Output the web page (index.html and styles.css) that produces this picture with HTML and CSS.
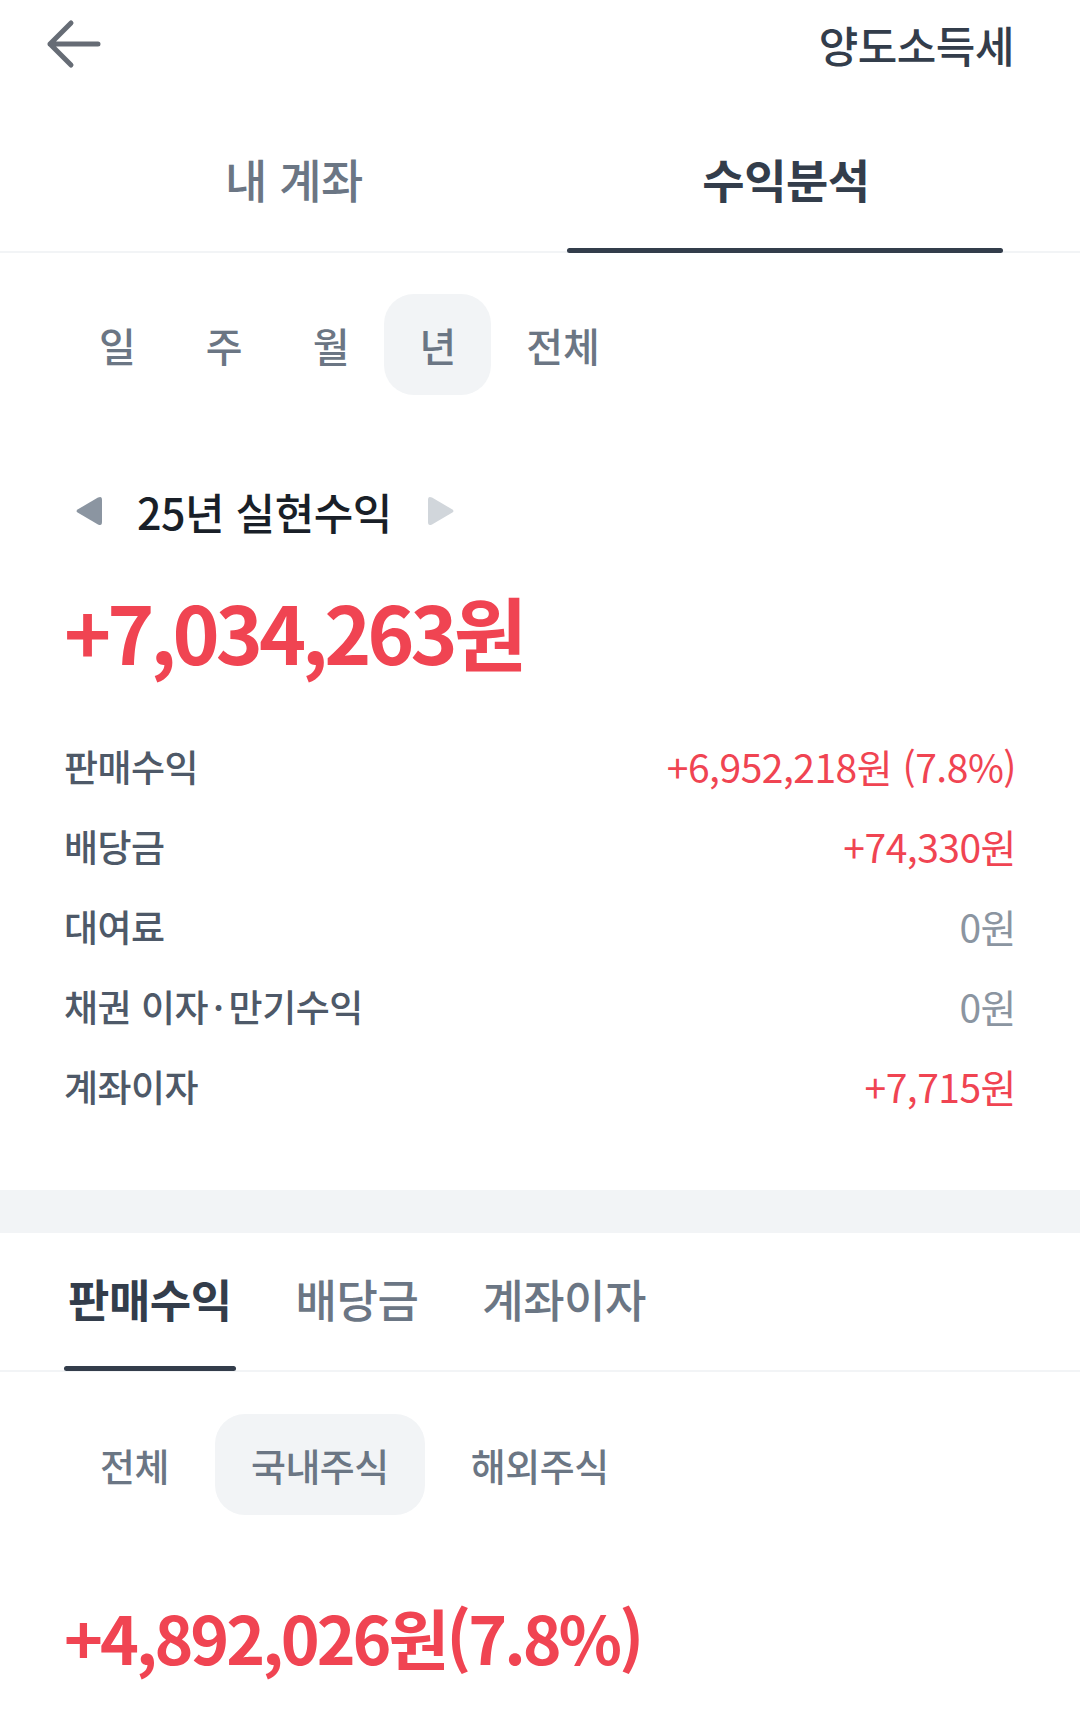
FILE: index.html
```html
<!DOCTYPE html>
<html lang="ko">
<head>
<meta charset="utf-8">
<title>수익분석</title>
<link rel="stylesheet" href="styles.css">
</head>
<body>
<div class="page">
  <header class="topbar">
    <svg class="back" width="56" height="52" viewBox="0 0 56 52" aria-hidden="true">
      <path d="M25 5 L4 26 L25 47 M4 26 H52" fill="none" stroke="#666c75" stroke-width="5" stroke-linecap="round" stroke-linejoin="round"/>
    </svg>
    <div class="top-title">양도소득세</div>
  </header>

  <nav class="main-tabs">
    <div class="main-tab">내 계좌</div>
    <div class="main-tab active">수익분석</div>
  </nav>

  <div class="periods">
    <div class="period">일</div>
    <div class="period">주</div>
    <div class="period">월</div>
    <div class="period active">년</div>
    <div class="period">전체</div>
  </div>

  <div class="year-row">
    <svg class="tri" width="30" height="32" viewBox="0 0 30 32" aria-hidden="true">
      <path d="M4 14.2 L24 2.6 Q28 0.5 28 5 V27 Q28 31.5 24 29.4 L4 17.8 Q1 16 4 14.2 Z" fill="#8b95a1"/>
    </svg>
    <div class="year-title">25년 실현수익</div>
    <svg class="tri" width="30" height="32" viewBox="0 0 30 32" aria-hidden="true">
      <path d="M26 14.2 L6 2.6 Q2 0.5 2 5 V27 Q2 31.5 6 29.4 L26 17.8 Q29 16 26 14.2 Z" fill="#d1d6db"/>
    </svg>
  </div>

  <div class="total">+7,034,263원</div>

  <ul class="rows">
    <li class="row"><span class="label">판매수익</span><span class="value plus">+6,952,218원 (7.8%)</span></li>
    <li class="row"><span class="label">배당금</span><span class="value plus">+74,330원</span></li>
    <li class="row"><span class="label">대여료</span><span class="value zero">0원</span></li>
    <li class="row"><span class="label">채권 이자<span class="dot">·</span>만기수익</span><span class="value zero">0원</span></li>
    <li class="row"><span class="label">계좌이자</span><span class="value plus">+7,715원</span></li>
  </ul>

  <div class="band"></div>

  <nav class="sub-tabs">
    <div class="sub-tab active">판매수익</div>
    <div class="sub-tab">배당금</div>
    <div class="sub-tab">계좌이자</div>
  </nav>

  <div class="chips">
    <div class="chip">전체</div>
    <div class="chip active">국내주식</div>
    <div class="chip">해외주식</div>
  </div>

  <div class="sub-total">+4,892,026원(7.8%)</div>
</div>
</body>
</html>
```

FILE: styles.css
```css
* { box-sizing: border-box; }
html, body { margin: 0; padding: 0; background: #ffffff; }
body {
  font-family: "Noto Sans CJK KR", "Noto Sans", sans-serif;
  color: #333d4b;
  width: 1080px;
  height: 1728px;
  overflow: hidden;
}
.page { width: 1080px; }

.topbar {
  height: 88px;
  display: flex;
  align-items: center;
  justify-content: space-between;
  padding: 0 66px 0 46px;
}
.back { display: block; }
.top-title {
  font-size: 43px;
  font-weight: 500;
  color: #333d4b;
  letter-spacing: -0.5px;
}

.main-tabs {
  display: flex;
  padding: 0 48px;
  border-bottom: 2px solid #f2f4f6;
}
.main-tab {
  flex: 1;
  height: 163px;
  padding-top: 17px;
  display: flex;
  align-items: center;
  justify-content: center;
  font-size: 46px;
  font-weight: 500;
  color: #6b7684;
  letter-spacing: -0.5px;
  position: relative;
}
.main-tab.active { color: #333d4b; font-weight: 700; }
.main-tab.active::after {
  content: "";
  position: absolute;
  left: 27px;
  right: 29px;
  bottom: -2px;
  height: 5px;
  border-radius: 3px;
  background: #333d4b;
}

.periods {
  display: flex;
  padding-left: 64px;
  margin-top: 41px;
}
.period {
  height: 101px;
  padding: 0 35px;
  display: flex;
  align-items: center;
  border-radius: 30px;
  font-size: 40px;
  font-weight: 500;
  color: #6b7684;
}
.period.active { background: #f2f4f6; }

.year-row {
  display: flex;
  align-items: center;
  height: 60px;
  margin-top: 86px;
  padding-left: 74px;
}
.tri { display: block; }
.year-title {
  margin: 0 34px 0 33px;
  font-size: 43px;
  font-weight: 500;
  color: #191f28;
  letter-spacing: -0.5px;
}

.total {
  margin-top: 41px;
  padding-left: 64px;
  height: 96px;
  line-height: 96px;
  font-size: 80px;
  font-weight: 700;
  color: #f04452;
  letter-spacing: -4px;
}

.rows {
  list-style: none;
  margin: 48px 0 0;
  padding: 0 64px;
}
.row {
  height: 80px;
  display: flex;
  align-items: center;
  justify-content: space-between;
}
.label { color: #4e5968; font-size: 37px; font-weight: 500; letter-spacing: -0.5px; }
.dot { margin: 0 5px; }
.value { font-size: 39px; letter-spacing: -0.5px; }
.value.plus { color: #f04452; }
.value.zero { color: #8b95a1; }

.band {
  margin-top: 64px;
  height: 43px;
  background: #f2f4f6;
}

.sub-tabs {
  display: flex;
  gap: 56px;
  padding: 0 64px;
  border-bottom: 2px solid #f2f4f6;
}
.sub-tab {
  height: 137px;
  padding: 0 4px 7px;
  display: flex;
  align-items: center;
  font-size: 45px;
  font-weight: 500;
  color: #6b7684;
  letter-spacing: -0.5px;
  position: relative;
}
.sub-tab.active { color: #333d4b; font-weight: 700; }
.sub-tab.active::after {
  content: "";
  position: absolute;
  left: 0;
  right: 0;
  bottom: -1px;
  height: 5px;
  border-radius: 3px;
  background: #333d4b;
}

.chips {
  display: flex;
  gap: 10px;
  padding-left: 64px;
  margin-top: 42px;
}
.chip {
  height: 101px;
  padding: 0 36px;
  display: flex;
  align-items: center;
  border-radius: 30px;
  font-size: 38px;
  font-weight: 500;
  color: #6b7684;
  letter-spacing: -0.5px;
}
.chip.active { background: #f2f4f6; }

.sub-total {
  margin-top: 81px;
  padding-left: 64px;
  height: 80px;
  line-height: 80px;
  font-size: 66px;
  font-weight: 700;
  color: #f04452;
  letter-spacing: -3px;
}
```
